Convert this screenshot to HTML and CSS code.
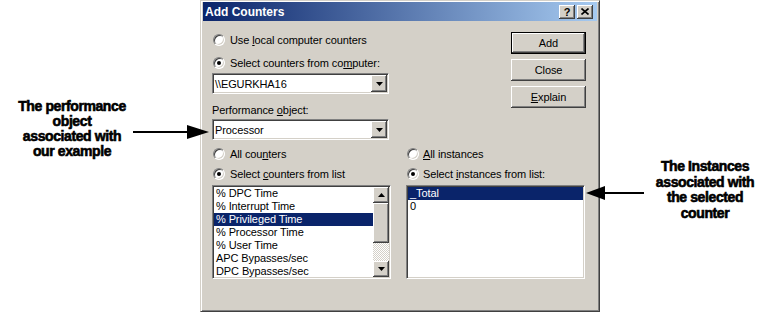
FILE: index.html
```html
<!DOCTYPE html>
<html lang="en">
<head>
    <meta charset="UTF-8">
    <title>Add Counters</title>
    <link rel="stylesheet" href="styles.css">
</head>
<body>
<div id="page">
    <div class="note note-left">The performance<br>object<br>associated with<br>our example</div>

    <div class="dialog">
        <div class="titlebar">
            <span class="title">Add Counters</span>
            <span class="cap-btn raised">?</span>
            <span class="cap-btn raised">
                <svg width="8" height="7" viewBox="0 0 8 7"><path d="M0.5 0.5 L7.5 6.5 M7.5 0.5 L0.5 6.5" stroke="#000" stroke-width="1.6"/></svg>
            </span>
        </div>

        <div class="dlg-body">
            <div class="top">
                <div class="top-left">
                    <div class="radio-row"><span class="radio"></span><span>Use <u>l</u>ocal computer counters</span></div>
                    <div class="radio-row gap"><span class="radio on"></span><span>Select counters from co<u>m</u>puter:</span></div>
                    <div class="combo sunken">
                        <span class="combo-text">\\EGURKHA16</span>
                        <span class="drop raised"><svg width="7" height="4" viewBox="0 0 7 4"><polygon points="0,0 7,0 3.5,4" fill="#000"/></svg></span>
                    </div>
                    <div class="field-label">Performance <u>o</u>bject:</div>
                    <div class="combo sunken tight">
                        <span class="combo-text">Processor</span>
                        <span class="drop raised"><svg width="7" height="4" viewBox="0 0 7 4"><polygon points="0,0 7,0 3.5,4" fill="#000"/></svg></span>
                    </div>
                </div>
                <div class="buttons">
                    <div class="btn raised default">Add</div>
                    <div class="btn raised">Close</div>
                    <div class="btn raised"><span><u>E</u>xplain</span></div>
                </div>
            </div>

            <div class="lists">
                <div class="list-col">
                    <div class="radio-row"><span class="radio"></span><span>All cou<u>n</u>ters</span></div>
                    <div class="radio-row"><span class="radio on"></span><span>Select <u>c</u>ounters from list</span></div>
                    <div class="listbox sunken">
                        <div class="items">
                            <div class="item">% DPC Time</div>
                            <div class="item">% Interrupt Time</div>
                            <div class="item sel">% Privileged Time</div>
                            <div class="item">% Processor Time</div>
                            <div class="item">% User Time</div>
                            <div class="item">APC Bypasses/sec</div>
                            <div class="item">DPC Bypasses/sec</div>
                        </div>
                        <div class="vscroll">
                            <div class="sb-btn raised"><svg width="7" height="4" viewBox="0 0 7 4"><polygon points="3.5,0 7,4 0,4" fill="#000"/></svg></div>
                            <div class="thumb raised"></div>
                            <div class="track"></div>
                            <div class="sb-btn raised"><svg width="7" height="4" viewBox="0 0 7 4"><polygon points="0,0 7,0 3.5,4" fill="#000"/></svg></div>
                        </div>
                    </div>
                </div>
                <div class="list-col">
                    <div class="radio-row narrow"><span class="radio"></span><span><u>A</u>ll instances</span></div>
                    <div class="radio-row narrow"><span class="radio on"></span><span>Select <u>i</u>nstances from list:</span></div>
                    <div class="listbox sunken">
                        <div class="items">
                            <div class="item sel">_Total</div>
                            <div class="item">0</div>
                        </div>
                    </div>
                </div>
            </div>
        </div>
    </div>

    <div class="note note-right">The Instances<br>associated with<br>the selected<br>counter</div>

    <svg class="arrow arrow-left" width="77" height="14" viewBox="0 0 77 14">
        <rect x="0" y="6" width="56" height="2" fill="#000"/>
        <polygon points="54,0 76,7 54,14" fill="#000"/>
    </svg>
    <svg class="arrow arrow-right" width="58" height="14" viewBox="0 0 58 14">
        <rect x="17" y="6" width="41" height="2" fill="#000"/>
        <polygon points="19,0 0,7 19,14" fill="#000"/>
    </svg>
</div>
</body>
</html>
```

FILE: styles.css
```css
body {
    margin: 0;
    background: #fff;
    font-family: "Liberation Sans", Arial, sans-serif;
    color: #000;
}

#page {
    position: relative;
    width: 784px;
    height: 313px;
    display: flex;
    align-items: flex-start;
}

/* callout texts */
.note {
    font-size: 14px;
    font-weight: bold;
    text-align: center;
    letter-spacing: -0.4px;
    -webkit-text-stroke: 0.6px #000;
}

.note-left {
    width: 144px;
    margin-right: 56px;
    padding-top: 99px;
    line-height: 15px;
}

.note-right {
    width: 118px;
    margin-left: 46px;
    padding-top: 159px;
    line-height: 15.5px;
}

.arrow {
    position: absolute;
}

.arrow-left {
    left: 133px;
    top: 125px;
}

.arrow-right {
    left: 586px;
    top: 186px;
}

/* dialog */
.dialog {
    width: 400px;
    height: 312px;
    box-sizing: border-box;
    border: 1px solid;
    border-color: #d4d0c8 #404040 #404040 #d4d0c8;
    box-shadow: inset 1px 1px #fff, inset -1px -1px #808080;
    padding: 1px 2px 2px 2px;
    background: #d4d0c8;
    display: flex;
    flex-direction: column;
    font-size: 11px;
    letter-spacing: -0.1px;
}

.titlebar {
    height: 19px;
    display: flex;
    align-items: center;
    padding: 0 4px 0 2px;
    background: linear-gradient(to right, #0a246a, #a6caf0);
}

.title {
    flex: 1 1 auto;
    color: #fff;
    font-size: 12px;
    font-weight: bold;
    letter-spacing: 0;
}

.raised {
    box-sizing: border-box;
    background: #d4d0c8;
    box-shadow: inset -1px -1px #404040, inset 1px 1px #fff, inset -2px -2px #808080, inset 2px 2px #d4d0c8;
}

.sunken {
    box-sizing: border-box;
    background: #fff;
    border: 1px solid;
    border-color: #808080 #fff #fff #808080;
    box-shadow: inset 1px 1px #404040, inset -1px -1px #d4d0c8;
    padding: 1px;
}

.cap-btn {
    width: 16px;
    height: 14px;
    display: flex;
    align-items: center;
    justify-content: center;
    font-size: 11px;
    font-weight: bold;
    letter-spacing: 0;
}

.cap-btn + .cap-btn {
    margin-left: 2px;
}

.dlg-body {
    flex: 1 1 auto;
    display: flex;
    flex-direction: column;
    padding: 0 11px 0 9px;
}

.top {
    display: flex;
    justify-content: space-between;
}

.top-left {
    width: 177px;
    padding-top: 9px;
    display: flex;
    flex-direction: column;
}

.radio-row {
    height: 20px;
    display: flex;
    align-items: center;
    gap: 5px;
    padding-left: 1px;
    white-space: nowrap;
}

.radio-row.gap {
    margin-top: 3px;
}

.radio-row.narrow {
    gap: 4px;
}

.radio {
    position: relative;
    flex: none;
    width: 12px;
    height: 12px;
    box-sizing: border-box;
    border-radius: 50%;
    background: #fff;
    border: 1px solid;
    border-color: #808080 #fff #fff #808080;
    box-shadow: inset 1px 1px #404040, inset -1px -1px #d4d0c8;
}

.radio.on::after {
    content: '';
    position: absolute;
    left: 3px;
    top: 3px;
    width: 4px;
    height: 4px;
    border-radius: 50%;
    background: #000;
}

.combo {
    height: 21px;
    display: flex;
    align-items: center;
}

.combo.tight {
    margin-top: 2px;
}

.combo-text {
    flex: 1 1 auto;
    padding-left: 1px;
}

.drop {
    width: 16px;
    height: 17px;
    display: flex;
    align-items: center;
    justify-content: center;
}

.field-label {
    margin-top: 10px;
    height: 13px;
    line-height: 13px;
}

.buttons {
    width: 75px;
    padding-top: 11px;
    display: flex;
    flex-direction: column;
    gap: 5px;
}

.btn {
    height: 22px;
    display: flex;
    align-items: center;
    justify-content: center;
}

.btn.default {
    border: 1px solid #000;
}

.lists {
    margin-top: 4px;
    display: flex;
    gap: 15px;
}

.list-col {
    width: 179px;
    display: flex;
    flex-direction: column;
}

.listbox {
    margin-top: 1px;
    height: 94px;
    display: flex;
}

.items {
    flex: 1 1 auto;
    overflow: hidden;
}

.item {
    height: 13px;
    line-height: 13px;
    padding-left: 2px;
    white-space: nowrap;
}

.item.sel {
    background: #0a246a;
    color: #fff;
}

.vscroll {
    width: 16px;
    display: flex;
    flex-direction: column;
}

.sb-btn {
    height: 16px;
    display: flex;
    align-items: center;
    justify-content: center;
}

.thumb {
    height: 40px;
}

.track {
    flex: 1 1 auto;
    background: repeating-conic-gradient(#fff 0 25%, #d4d0c8 0 50%) 0 0 / 2px 2px;
}
```
